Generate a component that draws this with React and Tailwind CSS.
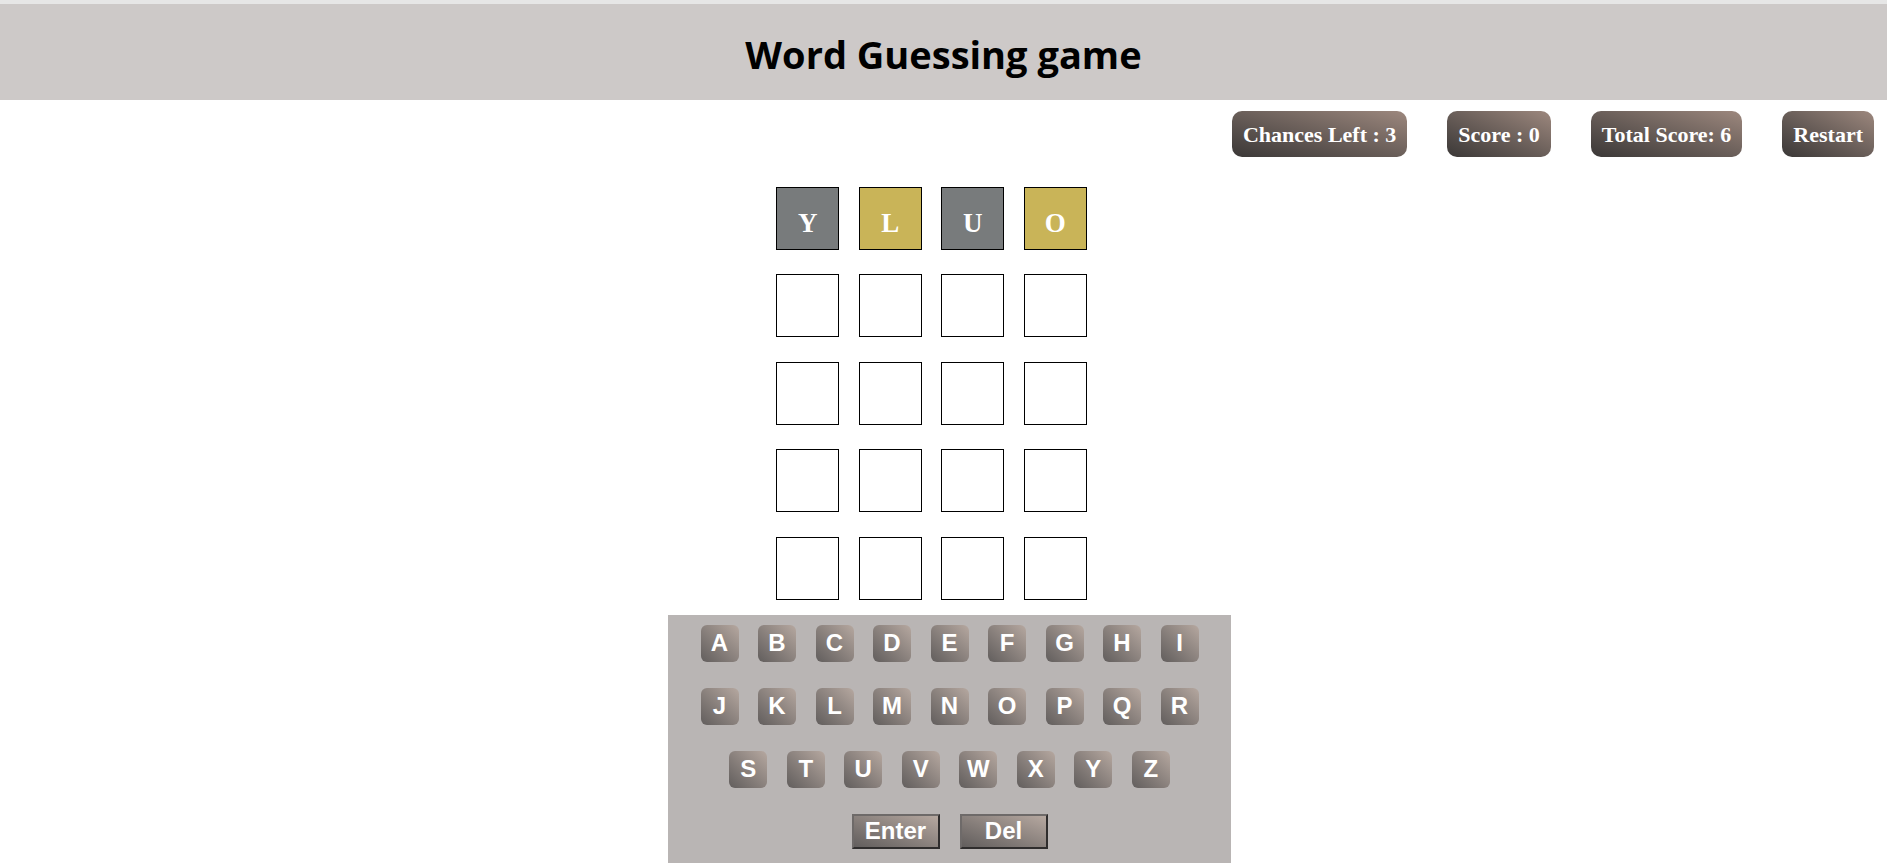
import React from 'react';

const rows = [
  [
    { ch: 'Y', state: 'absent' },
    { ch: 'L', state: 'present' },
    { ch: 'U', state: 'absent' },
    { ch: 'O', state: 'present' },
  ],
  [{}, {}, {}, {}],
  [{}, {}, {}, {}],
  [{}, {}, {}, {}],
  [{}, {}, {}, {}],
];

const keyRows = ['ABCDEFGHI', 'JKLMNOPQR', 'STUVWXYZ'];

const Tile = ({ ch, state }) => {
  const bg =
    state === 'absent' ? 'bg-[#787b7c]' : state === 'present' ? 'bg-[#c9b458]' : 'bg-white';
  return (
    <div
      className={`w-[63px] h-[63px] border border-black flex items-center justify-center pt-[10px] text-white font-bold text-[27px] ${bg}`}
      style={{ fontFamily: '"Liberation Serif", serif' }}
    >
      {ch}
    </div>
  );
};

const StatButton = ({ children }) => (
  <button
    className="h-[46px] px-[11px] rounded-[10px] bg-linear-to-tr from-[#3b3837] to-[#9d887e] text-white font-bold text-[22px]"
    style={{ fontFamily: '"Liberation Serif", serif' }}
  >
    {children}
  </button>
);

const App = () => {
  return (
    <div className="min-h-screen bg-white">
      <div className="h-[4px] bg-[#e6e6e6]" />
      <header className="h-[96px] bg-[#cdc9c8] flex items-center justify-center pt-[4px]">
        <h1
          className="text-[38px] font-bold text-black"
          style={{ fontFamily: '"Comic Sans MS", "Open Sans", sans-serif' }}
        >
          Word Guessing game
        </h1>
      </header>

      <div className="mt-[11px] flex justify-end gap-[40px] pr-[13px]">
        <StatButton>Chances Left : 3</StatButton>
        <StatButton>Score : 0</StatButton>
        <StatButton>Total Score: 6</StatButton>
        <StatButton>Restart</StatButton>
      </div>

      <div className="mt-[30px] flex justify-center">
        <div className="mr-[24px] flex flex-col gap-[24.4px]">
          {rows.map((row, i) => (
            <div key={i} className="flex gap-[19.5px]">
              {row.map((t, j) => (
                <Tile key={j} ch={t.ch} state={t.state} />
              ))}
            </div>
          ))}
        </div>
      </div>

      <div className="mt-[15px] flex justify-center">
        <div
          className="ml-[12px] w-[563px] bg-[#b9b5b4] pt-[10px] pb-[14px] flex flex-col items-center gap-[26px]"
          style={{ fontFamily: '"Liberation Sans", Arial, sans-serif' }}
        >
          {keyRows.map((r) => (
            <div key={r} className="flex gap-[19.5px]">
              {r.split('').map((k) => (
                <button
                  key={k}
                  className="w-[38px] h-[37px] rounded-[6px] bg-linear-to-tr from-[#625e5d] to-[#b6a8a0] text-white font-bold text-[24px] flex items-center justify-center"
                >
                  {k}
                </button>
              ))}
            </div>
          ))}
          <div className="flex gap-[20px]">
            {['Enter', 'Del'].map((k) => (
              <button
                key={k}
                className="w-[88px] h-[35px] border-2 border-t-[#6e6a69] border-l-[#6e6a69] border-b-[#2f2d2d] border-r-[#2f2d2d] bg-linear-to-tr from-[#625e5d] to-[#b6a8a0] text-white font-bold text-[24px] flex items-center justify-center"
              >
                {k}
              </button>
            ))}
          </div>
        </div>
      </div>
    </div>
  );
};

export default App;
